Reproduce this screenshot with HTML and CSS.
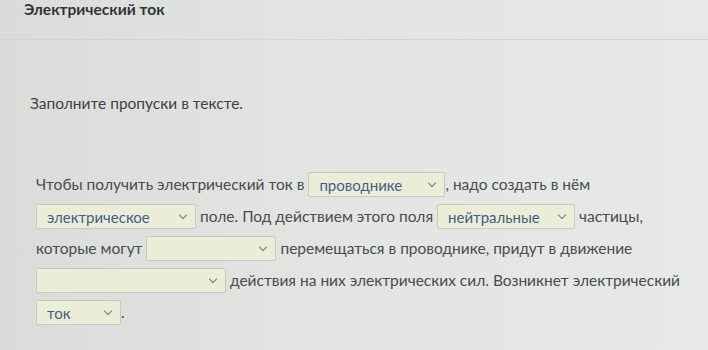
FILE: index.html
```html
<!DOCTYPE html>
<html lang="ru">
<head>
<meta charset="utf-8">
<link rel="stylesheet" href="styles.css">
</head>
<body>
<div class="page">
  <header class="header"><h1 class="title">Электрический ток</h1></header>
  <p class="instruction">Заполните пропуски в тексте.</p>
  <p class="task">
    Чтобы получить электрический ток в <span class="sel w137"><span class="val">проводнике</span><span class="chev"></span></span>, надо создать в нём<br>
    <span class="sel w160"><span class="val">электрическое</span><span class="chev"></span></span> поле. Под действием этого поля <span class="sel w138"><span class="val">нейтральные</span><span class="chev"></span></span> частицы,<br>
    которые могут <span class="sel w130"><span class="val"></span><span class="chev"></span></span> перемещаться в проводнике, придут в движение<br>
    <span class="sel w190"><span class="val"></span><span class="chev"></span></span> действия на них электрических сил. Возникнет электрический<br>
    <span class="sel w85"><span class="val">ток</span><span class="chev"></span></span>.
  </p>
</div>
</body>
</html>
```
FILE: styles.css
```css
html, body {
  margin: 0;
  padding: 0;
}
body {
  width: 708px;
  height: 350px;
  overflow: hidden;
  background: linear-gradient(90deg, #dadcd9 0%, #e2e4e1 40%, #e7e9e6 100%);
  font-family: Lato, "Open Sans", sans-serif;
  color: #4a4c4f;
}
.header {
  height: 40px;
  border-bottom: 1px solid #d3d5d1;
  padding: 0 24px;
  box-sizing: border-box;
}
.title {
  margin: 0;
  font-size: 15.5px;
  font-weight: 700;
  line-height: 18px;
  color: #303338;
  padding-top: 0;
}
.instruction {
  margin: 53px 0 0 30px;
  font-size: 15.5px;
  line-height: 20px;
  color: #3f4144;
}
.task {
  margin: 55px 0 0 36px;
  font-size: 15.5px;
  line-height: 32px;
  color: #4a4c4f;
}
.sel {
  display: inline-flex;
  align-items: center;
  justify-content: space-between;
  box-sizing: border-box;
  height: 25px;
  vertical-align: middle;
  background: #ecedd6;
  border: 1px solid #c9cabb;
  border-radius: 2px;
  padding: 0 9px 0 10px;
  margin-top: -3px;
}
.val {
  color: #3e5f86;
  font-size: 15px;
  line-height: 20px;
}
.chev {
  width: 5px;
  height: 5px;
  border-right: 1.5px solid #6a7a8e;
  border-bottom: 1.5px solid #6a7a8e;
  transform: rotate(45deg);
  margin-top: -4px;
}
.w137 { width: 137px; }
.w160 { width: 160px; }
.w138 { width: 138px; }
.w130 { width: 130px; }
.w190 { width: 190px; }
.w85 { width: 85px; }
```
